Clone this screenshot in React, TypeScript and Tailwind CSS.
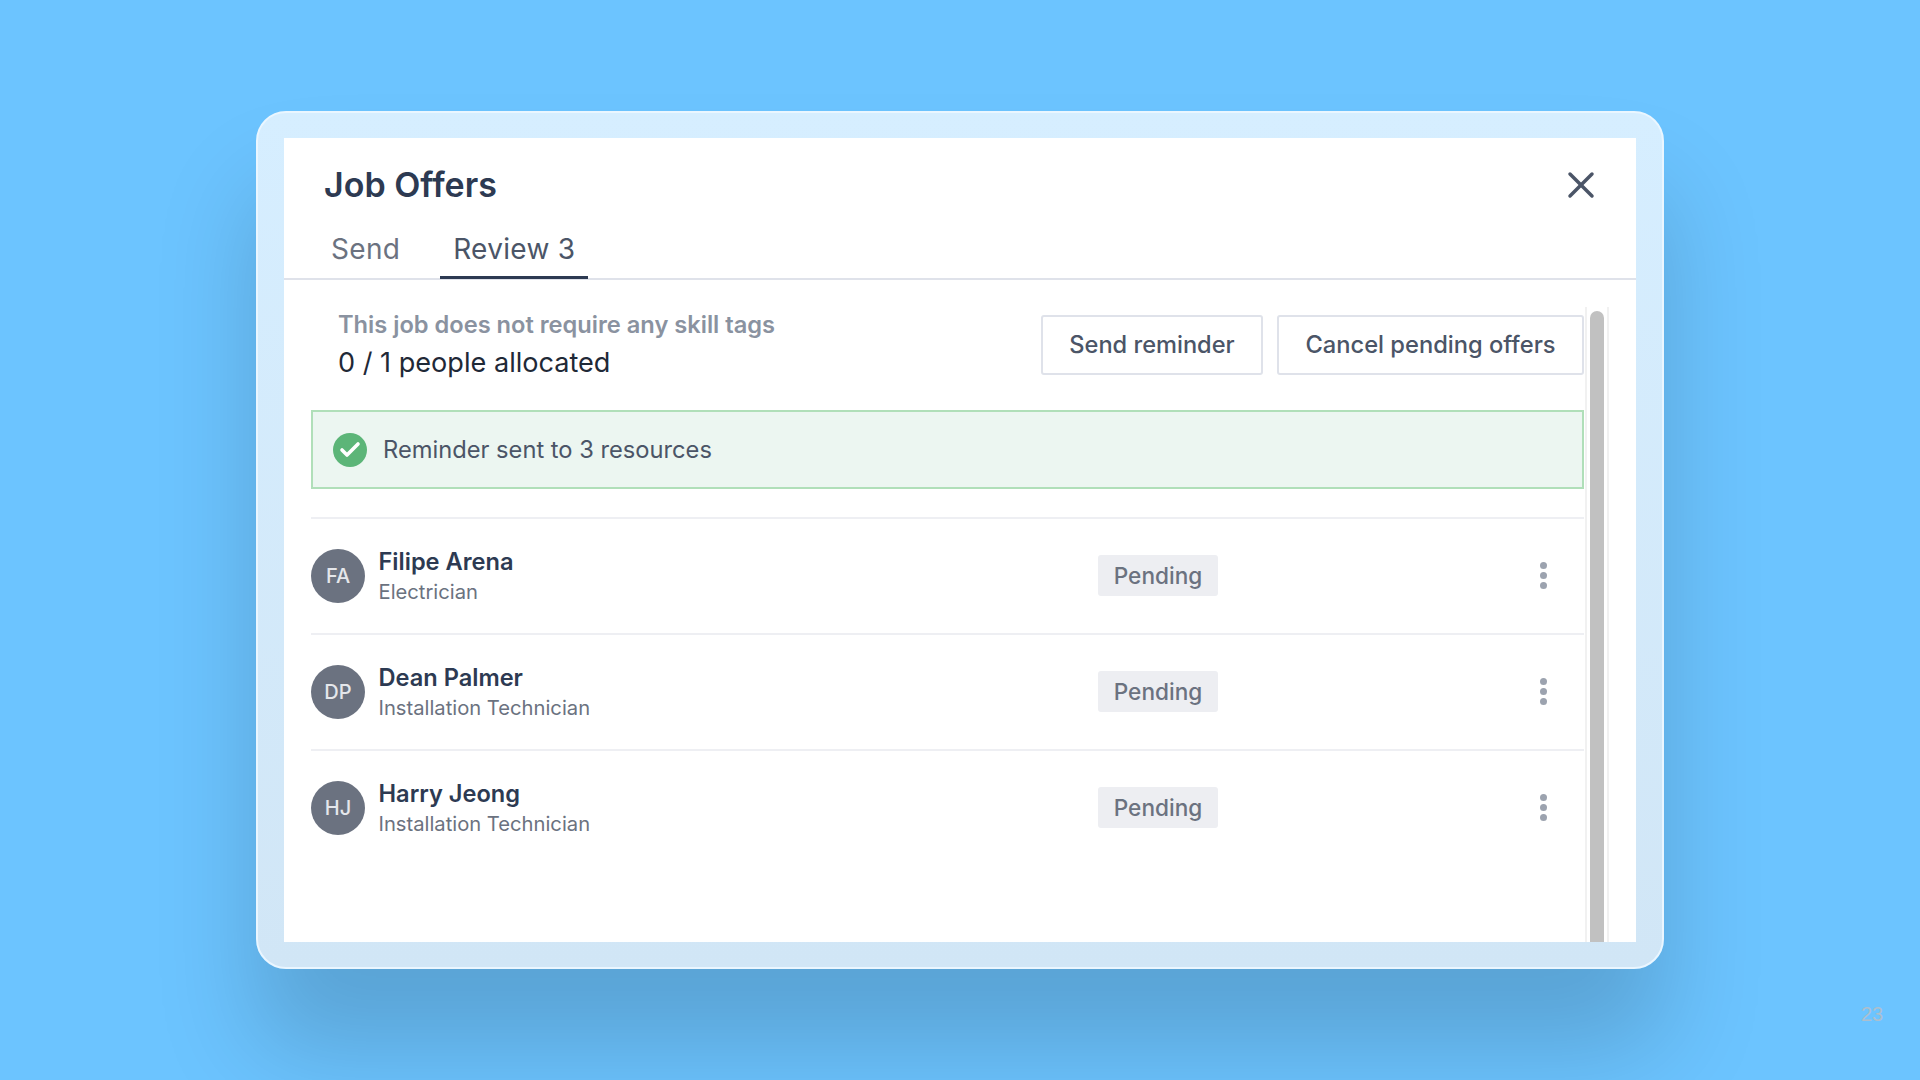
import { X, Check } from 'lucide-react';

const people = [
  { initials: 'FA', name: 'Filipe Arena', role: 'Electrician' },
  { initials: 'DP', name: 'Dean Palmer', role: 'Installation Technician' },
  { initials: 'HJ', name: 'Harry Jeong', role: 'Installation Technician' },
];

function PersonRow({ initials, name, role }: { initials: string; name: string; role: string }) {
  return (
    <div className="flex h-[116px] items-center border-t-2 border-[#eeeff3]">
      <div className="flex h-[54px] w-[54px] shrink-0 items-center justify-center rounded-full bg-[#6b7280] text-[20px] font-medium text-[#e5e7eb]">
        {initials}
      </div>
      <div className="ml-[13.5px] w-[719.5px] shrink-0 pt-[2px]">
        <div className="text-[23.6px] leading-[30px] font-semibold text-[#2d3a52]">{name}</div>
        <div className="text-[20.2px] leading-[29px] text-[#6b7280]">{role}</div>
      </div>
      <div className="flex h-[41px] w-[120px] shrink-0 items-center justify-center rounded-[3px] bg-[#edeef2] text-[22.6px] font-medium text-[#6b7280]">
        Pending
      </div>
      <div className="ml-[322px] flex flex-col gap-[3px]">
        <span className="h-[7px] w-[7px] rounded-full bg-[#9ca3af]" />
        <span className="h-[7px] w-[7px] rounded-full bg-[#9ca3af]" />
        <span className="h-[7px] w-[7px] rounded-full bg-[#9ca3af]" />
      </div>
    </div>
  );
}

export default function App() {
  return (
    <div className="relative h-[1080px] w-[1920px] overflow-hidden bg-[#6cc4ff] pt-[111px] pl-[256px] font-['Inter',sans-serif]">
      <div className="h-[858px] w-[1408px] rounded-[30px] border-2 border-[#eaf6ff] bg-gradient-to-b from-[#d6eeff] to-[#d1e6f6] pt-[25px] pl-[26px] shadow-[0_80px_100px_rgba(0,0,0,0.17)]">
        <div className="flex h-[804px] w-[1352px] flex-col overflow-hidden bg-white">
          <div className="flex h-[142px] shrink-0 flex-col border-b-2 border-[#dfe2ea]">
            <div className="flex h-[94px] shrink-0 items-center justify-between pr-[33px] pl-[40px]">
              <h1 className="-mt-[1px] text-[34px] font-semibold text-[#2d3a52]">Job Offers</h1>
              <X className="h-[44px] w-[44px] text-[#4b5567]" strokeWidth={1.9} />
            </div>
            <div className="flex h-[47px] shrink-0 pl-[34px] text-[28px] tracking-[0.3px]">
              <div className="px-[13px] leading-[34px] text-[#6b7280]">Send</div>
              <div className="ml-[27px] border-b-[3px] border-[#2d3a52] px-[13px] leading-[34px] text-[#4b5567]">
                Review 3
              </div>
            </div>
          </div>
          <div className="flex min-h-0 flex-1 pt-[27px] pl-[27px]">
            <div className="w-[1273px] shrink-0 pt-[8px]">
              <div className="flex h-[60px] justify-between pl-[27px]">
                <div>
                  <div className="mt-[-9px] text-[23.65px] leading-[38px] font-semibold text-[#8a92a0]">
                    This job does not require any skill tags
                  </div>
                  <div className="text-[27.1px] leading-[38px] text-[#1f2937]">0 / 1 people allocated</div>
                </div>
                <div className="flex gap-[14px]">
                  <button className="h-[60px] w-[222px] rounded-[3px] border-2 border-[#dfe2ea] text-[23.6px] font-medium text-[#4b5567]">
                    Send reminder
                  </button>
                  <button className="h-[60px] w-[307px] rounded-[3px] border-2 border-[#dfe2ea] text-[23.7px] font-medium text-[#4b5567]">
                    Cancel pending offers
                  </button>
                </div>
              </div>
              <div className="mt-[35px] flex h-[79px] items-center border-2 border-[#b0dfb9] bg-[#ecf6f1] pl-[20px]">
                <div className="flex h-[34px] w-[34px] items-center justify-center rounded-full bg-[#5cb578]">
                  <Check className="h-[24px] w-[24px] text-white" strokeWidth={3.6} />
                </div>
                <span className="ml-[16px] text-[23.7px] text-[#4b5567]">Reminder sent to 3 resources</span>
              </div>
              <div className="mt-[27.5px]">
                {people.map((p) => (
                  <PersonRow key={p.initials} {...p} />
                ))}
              </div>
            </div>
            <div className="ml-[1px] w-[24px] shrink-0 border-x-2 border-[#f1f1f1] bg-white px-[3px] pt-[4px]">
              <div className="h-full w-full rounded-t-full bg-[#c1c1c1]" />
            </div>
          </div>
        </div>
      </div>
      <div className="absolute top-[999px] left-[1861px] font-['Liberation_Sans',sans-serif] text-[20px] text-[#adbfce]">
        23
      </div>
    </div>
  );
}
